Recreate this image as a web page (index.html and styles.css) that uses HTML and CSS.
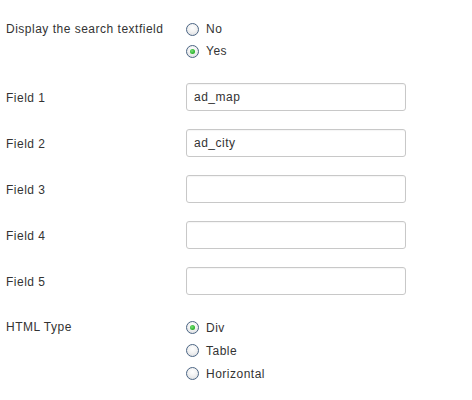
FILE: index.html
```html
<!DOCTYPE html>
<html>
<head>
<meta charset="utf-8">
<link rel="stylesheet" href="styles.css">
</head>
<body>
<div class="form">
  <div class="row radio-row">
    <div class="label">Display the search textfield</div>
    <div class="options">
      <label class="opt"><span class="radio"></span>No</label>
      <label class="opt"><span class="radio checked"></span>Yes</label>
    </div>
  </div>
  <div class="row field-row">
    <div class="label">Field 1</div>
    <div class="input">ad_map</div>
  </div>
  <div class="row field-row">
    <div class="label">Field 2</div>
    <div class="input">ad_city</div>
  </div>
  <div class="row field-row">
    <div class="label">Field 3</div>
    <div class="input"></div>
  </div>
  <div class="row field-row">
    <div class="label">Field 4</div>
    <div class="input"></div>
  </div>
  <div class="row field-row">
    <div class="label">Field 5</div>
    <div class="input"></div>
  </div>
  <div class="row radio-row last">
    <div class="label">HTML Type</div>
    <div class="options">
      <label class="opt tall"><span class="radio checked"></span>Div</label>
      <label class="opt tall"><span class="radio"></span>Table</label>
      <label class="opt tall"><span class="radio"></span>Horizontal</label>
    </div>
  </div>
</div>
</body>
</html>
```

FILE: styles.css
```css
html, body {
  margin: 0;
  padding: 0;
  background: #ffffff;
}
body {
  font-family: "Liberation Sans", Arial, sans-serif;
  font-size: 12px;
  letter-spacing: 0.5px;
  color: #333333;
  width: 472px;
  height: 400px;
}
.form {
  display: flex;
  flex-direction: column;
  padding: 18px 0 0 6px;
  gap: 18px;
}
.row {
  display: grid;
  grid-template-columns: 180px 220px;
  align-items: start;
}
.radio-row { margin-bottom: 3px; }
.radio-row.last { margin-top: 3px; }
.radio-row .label {
  height: 22px;
  line-height: 22px;
}
.field-row {
  align-items: center;
  height: 28px;
}
.field-row .label {
  padding-top: 1px;
}
.options {
  display: flex;
  flex-direction: column;
}
.opt {
  display: flex;
  align-items: center;
  height: 22px;
  gap: 7px;
}
.opt.tall { height: 23px; }
.radio {
  width: 11px;
  height: 11px;
  border-radius: 50%;
  border: 1px solid #4b6584;
  background: radial-gradient(circle at 50% 35%, #ffffff 0%, #f2f2f2 45%, #d5d8dc 100%);
  display: flex;
  align-items: center;
  justify-content: center;
  box-sizing: content-box;
}
.radio.checked::after {
  content: "";
  width: 5px;
  height: 5px;
  border-radius: 50%;
  background: radial-gradient(circle at 40% 40%, #7be07b 0%, #2fb62f 60%, #1c8f1c 100%);
}
.input {
  box-sizing: border-box;
  width: 220px;
  height: 28px;
  border: 1px solid #c8c8c8;
  border-radius: 3px;
  padding: 0 7px;
  line-height: 26px;
  color: #333333;
  box-shadow: inset 0 1px 1px rgba(0,0,0,0.04);
}
```
